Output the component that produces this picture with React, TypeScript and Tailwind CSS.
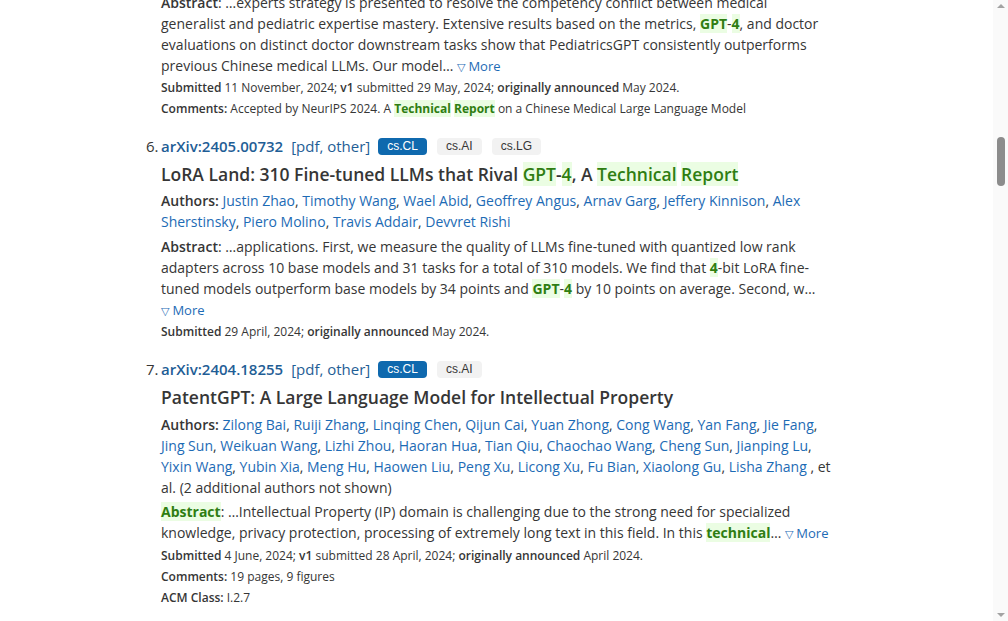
import React from "react";

const Hl = ({ children, bold = true }: { children: React.ReactNode; bold?: boolean }) => (
  <span className={`bg-[#ebfde3] text-[#2f7d12] ${bold ? "font-bold" : ""}`}>{children}</span>
);

const A = ({ children }: { children: React.ReactNode }) => (
  <a className="text-[#1d6bb5]">{children}</a>
);

const More = () => (
  <a className="text-[13px] text-[#1d6bb5]">
    <span className="text-[11px]">▽</span> More
  </a>
);

const Line = ({ children }: { children: React.ReactNode }) => (
  <span className="block whitespace-nowrap">{children}</span>
);

const Tag = ({ label, primary }: { label: string; primary?: boolean }) => (
  <span
    className={`inline-flex h-[17px] items-center rounded-[4px] px-[9px] font-['Liberation_Sans',sans-serif] text-[12px] ${
      primary ? "bg-[#0f69ae] text-white" : "bg-[#f2f2f2] text-[#363636]"
    }`}
  >
    {label}
  </span>
);

function Header({ n, id, tags }: { n: number; id: string; tags: string[] }) {
  return (
    <div className="flex h-[28px] items-center">
      <span className="w-[15px] -ml-[15px] text-[15px]">{n}.</span>
      <a className="text-[15px] font-semibold text-[#1f5e96]">arXiv:{id}</a>
      <span className="ml-[8px] text-[15px] font-medium text-[#1f5e96]">[pdf, other]</span>
      <div className="ml-[8px] flex gap-[10px]">
        {tags.map((t, i) => (
          <Tag key={t} label={t} primary={i === 0} />
        ))}
      </div>
    </div>
  );
}

function Meta({ children, className = "" }: { children: React.ReactNode; className?: string }) {
  return <p className={`h-[21px] text-[12px] leading-[21px] ${className}`}>{children}</p>;
}

function Scrollbar() {
  return (
    <div className="flex w-[15px] shrink-0 flex-col items-center justify-between bg-[#fafafa] py-[4px]">
      <span className="h-0 w-0 border-x-[4px] border-b-[4px] border-x-transparent border-b-[#a3a3a3]" />
      <div className="flex flex-1 flex-col pt-[129px]">
        <span className="h-[49px] w-[8px] rounded-full bg-[#8c8c8c]" />
      </div>
      <span className="h-0 w-0 border-x-[4px] border-t-[4px] border-x-transparent border-t-[#a3a3a3]" />
    </div>
  );
}

export default function App() {
  return (
    <div className="flex h-[621px] w-[1008px] overflow-hidden bg-white font-['Open_Sans',sans-serif] text-[#363636]">
      <main className="flex-1 overflow-hidden pl-[161px]">
        <div className="-mt-[8px]">
          {/* result 5 (tail) */}
          <section className="text-[14px] leading-[21px]">
            <Line>
              <b className="font-semibold">Abstract</b>: …experts strategy is presented to resolve the competency conflict between medical
            </Line>
            <Line>
              generalist and pediatric expertise mastery. Extensive results based on the metrics, <Hl>GPT</Hl>-<Hl>4</Hl>, and doctor
            </Line>
            <Line>evaluations on distinct doctor downstream tasks show that PediatricsGPT consistently outperforms</Line>
            <Line>
              previous Chinese medical LLMs. Our model… <More />
            </Line>
          </section>
          <Meta>
            <b className="font-semibold">Submitted</b> 11 November, 2024; <b className="font-semibold">v1</b> submitted 29 May, 2024;{" "}
            <b className="font-semibold">originally announced</b> May 2024.
          </Meta>
          <Meta>
            <b className="font-semibold">Comments:</b> Accepted by NeurIPS 2024. A <Hl>Technical</Hl> <Hl>Report</Hl> on a Chinese Medical Large Language Model
          </Meta>

          {/* result 6 */}
          <div className="mt-[13px]">
            <Header n={6} id="2405.00732" tags={["cs.CL", "cs.AI", "cs.LG"]} />
            <h2 className="h-[30px] text-[17.5px] font-semibold leading-[28px]">
              LoRA Land: 310 Fine-tuned LLMs that Rival <Hl bold={false}>GPT</Hl>-<Hl bold={false}>4</Hl>, A{" "}
              <Hl bold={false}>Technical</Hl> <Hl bold={false}>Report</Hl>
            </h2>
            <div className="text-[14px] leading-[21px]">
              <Line>
                <b className="font-semibold">Authors:</b> <A>Justin Zhao</A>, <A>Timothy Wang</A>, <A>Wael Abid</A>, <A>Geoffrey Angus</A>,{" "}
                <A>Arnav Garg</A>, <A>Jeffery Kinnison</A>, <A>Alex</A>
              </Line>
              <Line>
                <A>Sherstinsky</A>, <A>Piero Molino</A>, <A>Travis Addair</A>, <A>Devvret Rishi</A>
              </Line>
              <div className="mt-[4px]">
                <Line>
                  <b className="font-semibold">Abstract</b>: …applications. First, we measure the quality of LLMs fine-tuned with quantized low rank
                </Line>
                <Line>
                  adapters across 10 base models and 31 tasks for a total of 310 models. We find that <Hl>4</Hl>-bit LoRA fine-
                </Line>
                <Line>
                  tuned models outperform base models by 34 points and <Hl>GPT</Hl>-<Hl>4</Hl> by 10 points on average. Second, w…
                </Line>
                <Line>
                  <More />
                </Line>
              </div>
            </div>
            <Meta>
              <b className="font-semibold">Submitted</b> 29 April, 2024; <b className="font-semibold">originally announced</b> May 2024.
            </Meta>
          </div>

          {/* result 7 */}
          <div className="mt-[13px]">
            <Header n={7} id="2404.18255" tags={["cs.CL", "cs.AI"]} />
            <h2 className="h-[31px] text-[17.5px] font-semibold leading-[28px]">
              PatentGPT: A Large Language Model for Intellectual Property
            </h2>
            <div className="text-[14px] leading-[21px]">
              <Line>
                <b className="font-semibold">Authors:</b> <A>Zilong Bai</A>, <A>Ruiji Zhang</A>, <A>Linqing Chen</A>, <A>Qijun Cai</A>,{" "}
                <A>Yuan Zhong</A>, <A>Cong Wang</A>, <A>Yan Fang</A>, <A>Jie Fang</A>,
              </Line>
              <Line>
                <A>Jing Sun</A>, <A>Weikuan Wang</A>, <A>Lizhi Zhou</A>, <A>Haoran Hua</A>, <A>Tian Qiu</A>, <A>Chaochao Wang</A>,{" "}
                <A>Cheng Sun</A>, <A>Jianping Lu</A>,
              </Line>
              <Line>
                <A>Yixin Wang</A>, <A>Yubin Xia</A>, <A>Meng Hu</A>, <A>Haowen Liu</A>, <A>Peng Xu</A>, <A>Licong Xu</A>, <A>Fu Bian</A>,{" "}
                <A>Xiaolong Gu</A>, <A>Lisha Zhang</A> , et
              </Line>
              <Line>al. (2 additional authors not shown)</Line>
              <div className="mt-[3px]">
                <Line>
                  <Hl>Abstract</Hl>: …Intellectual Property (IP) domain is challenging due to the strong need for specialized
                </Line>
                <Line>
                  knowledge, privacy protection, processing of extremely long text in this field. In this <Hl>technical</Hl>… <More />
                </Line>
              </div>
            </div>
            <Meta className="mt-[1px]">
              <b className="font-semibold">Submitted</b> 4 June, 2024; <b className="font-semibold">v1</b> submitted 28 April, 2024;{" "}
              <b className="font-semibold">originally announced</b> April 2024.
            </Meta>
            <Meta>
              <b className="font-semibold">Comments:</b> 19 pages, 9 figures
            </Meta>
            <Meta>
              <b className="font-semibold">ACM Class:</b> I.2.7
            </Meta>
          </div>
        </div>
      </main>
      <Scrollbar />
    </div>
  );
}
